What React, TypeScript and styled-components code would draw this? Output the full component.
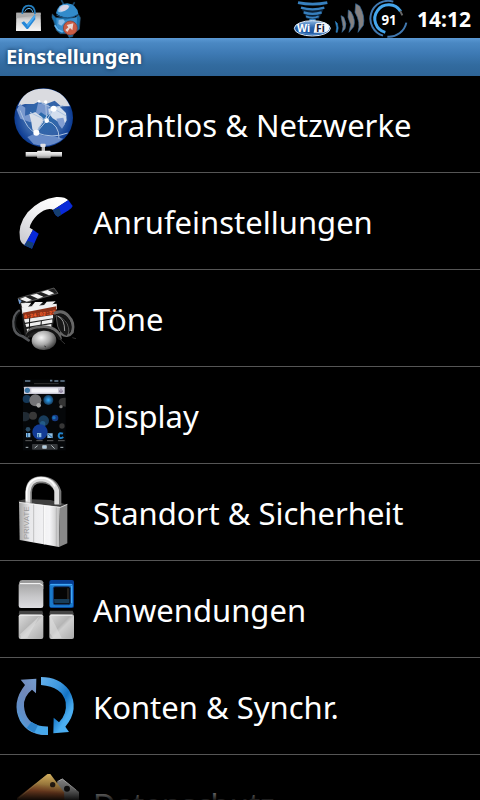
import React from 'react';
import styled, { createGlobalStyle } from 'styled-components';

const GlobalStyle = createGlobalStyle`
  * { box-sizing: border-box; }
  body { margin: 0; background: #000; }
`;

const Screen = styled.div`
  position: relative;
  display: flex;
  flex-direction: column;
  height: 100vh;
  overflow: hidden;
  background: #000;
  color: #fff;
  font-family: 'Noto Sans', 'Open Sans', sans-serif;
`;

const StatusBar = styled.div`
  display: flex;
  flex: none;
  align-items: center;
  justify-content: space-between;
  height: 38px;
  padding: 0 9px 0 14px;
`;

const StatusGroup = styled.div<{ $gap: number }>`
  display: flex;
  align-items: center;
  gap: ${(p) => p.$gap}px;
`;

const StatusIcon = styled.svg<{ $width: number }>`
  display: block;
  width: ${(p) => p.$width}px;
  height: 38px;
`;

const Clock = styled.time`
  margin-left: 6px;
  font-size: 21px;
  font-weight: 700;
  line-height: 38px;
`;

const TitleBar = styled.header`
  flex: none;
  height: 38px;
  padding: 0 6px;
  background: linear-gradient(#5b99d4 0, #4a88c3 5px, #3d79b3 16px, #326b9f 27px, #2e6496 100%);
`;

const Title = styled.h1`
  margin: 0;
  font-size: 20px;
  font-weight: 700;
  line-height: 38px;
  text-shadow: 0 0 4px #10304f;
`;

const List = styled.ul`
  flex: 1;
  min-height: 0;
  margin: 0;
  padding: 0;
  overflow: hidden;
  list-style: none;
`;

const Item = styled.li`
  border-bottom: 1px solid #555;
`;

const ItemButton = styled.button`
  display: flex;
  align-items: center;
  gap: 3px;
  width: 100%;
  height: 96px;
  padding: 0;
  border: 0;
  background: transparent;
  color: #fff;
  font-family: inherit;
  font-size: 31px;
  line-height: 44px;
  text-align: left;
  white-space: nowrap;
`;

const ItemLabel = styled.span`
  padding-top: 2px;
`;

const ItemIcon = styled.svg`
  flex: none;
  width: 90px;
  height: 96px;
`;

const Fade = styled.div`
  position: absolute;
  right: 0;
  bottom: 0;
  left: 0;
  height: 32px;
  background: linear-gradient(rgba(0, 0, 0, 0), rgba(0, 0, 0, 0.5) 70%, rgba(0, 0, 0, 0.9));
  pointer-events: none;
`;

const Row = ({ label, children }: { label: string; children: React.ReactNode }) => (
  <Item>
    <ItemButton type="button">
      <ItemIcon viewBox="0 0 270 288" aria-hidden="true">{children}</ItemIcon>
      <ItemLabel>{label}</ItemLabel>
    </ItemButton>
  </Item>
);

const BagIcon = () => (
  <StatusIcon $width={30} viewBox="42 0 90 114" aria-hidden="true">
    <defs>
      <linearGradient id="bag" x1="0" y1="0" x2="0" y2="1">
        <stop offset="0" stopColor="#969696" /><stop offset=".4" stopColor="#d6d6d6" /><stop offset="1" stopColor="#f4f4f4" />
      </linearGradient>
    </defs>
    <path d="M49 38H122L123 93H48Z" fill="url(#bag)" />
    <path d="M49 38H122V45L49 54Z" fill="#aaa" />
    <path d="M67 42Q67 17 86 17Q105 17 105 42" fill="none" stroke="#247dbd" strokeWidth="5" />
    <path d="M74 35Q78 25 87 25Q96 25 99 37" fill="none" stroke="#5db5ef" strokeWidth="3" />
    <path d="M64 68L72 64L81 73L105 43L106 58L84 87H80Z" fill="#2587d8" />
    <path d="M81 73L105 43L106 50L83 80Z" fill="#4eacf0" />
  </StatusIcon>
);

const DroidIcon = () => (
  <StatusIcon $width={32} viewBox="150 0 96 114" aria-hidden="true">
    <path d="M184 0L191 13M224 7L217 17" stroke="#17466c" strokeWidth="5" />
    <path d="M157 42Q153 53 161 63L169 91L181 101H202L207 112L218 110L220 101L238 88L241 53L236 44L226 53H168Z" fill="#176fab" stroke="#35536b" strokeWidth="2" />
    <path d="M168 40Q174 10 202 10Q231 13 235 42Q223 53 202 53Q180 52 168 40Z" fill="#328bcb" />
    <path d="M169 54L196 59L231 52L230 88L204 101L179 91L170 79Z" fill="#398ecd" />
    <path d="M169 45Q204 63 235 43" fill="none" stroke="#1b5688" strokeWidth="3" />
    <path d="M174 34Q177 15 192 14L210 17Q200 28 187 35Q179 39 174 34Z" fill="#9bc8ef" />
    <ellipse cx="193" cy="24" rx="14" ry="8" fill="#d7d3e5" transform="rotate(-25 193 24)" />
    <path d="M176 60L190 58L195 65L184 77L175 72Z" fill="#8ebee8" />
    <path d="M164 76L174 89L188 96" fill="none" stroke="#66b8f2" strokeWidth="5" />
    <circle cx="211" cy="84" r="21" fill="#ca5c44" stroke="#813a30" strokeWidth="2" />
    <path d="M200 75L220 70L217 91L210 84L202 96L196 90L205 82Z" fill="#e9d7d4" />
  </StatusIcon>
);

const WifiIcon = () => (
  <StatusIcon $width={38} viewBox="42 0 114 114" role="img" aria-label="WiFi">
    <defs>
      <linearGradient id="badge" x1="0" y1="0" x2="0" y2="1">
        <stop offset="0" stopColor="#8cb5df" /><stop offset=".45" stopColor="#2864ac" /><stop offset="1" stopColor="#174f9c" />
      </linearGradient>
    </defs>
    <path d="M66 23Q100 29 136 23L119 58H84Z" fill="#0b2137" />
    <g fill="none" stroke="#3780bf">
      <path d="M57 8Q101 17 145 8" strokeWidth="8" />
      <path d="M66 23Q100 33 136 23" strokeWidth="7" />
      <path d="M74 37Q100 46 128 37" strokeWidth="7" />
      <path d="M81 49Q101 57 119 49M91 60H110" strokeWidth="6" />
    </g>
    <ellipse cx="100" cy="85" rx="54" ry="23" fill="url(#badge)" stroke="#dbe9f7" strokeWidth="3" />
    <path d="M109 72Q112 68 120 68H137Q151 73 151 84Q150 96 135 98H104Z" fill="#f4f7fb" />
    <path d="M60 97Q94 108 133 100" fill="none" stroke="#5088c5" strokeWidth="4" />
    <text x="54" y="95" fontFamily="Noto Sans, sans-serif" fontSize="31" fontWeight="700" fill="#fff">Wi</text>
    <text x="111" y="95" fontFamily="Noto Sans, sans-serif" fontSize="31" fontWeight="700" fill="#17203a">Fi</text>
  </StatusIcon>
);

const SignalIcon = () => (
  <StatusIcon $width={34} viewBox="162 0 102 114" aria-hidden="true">
    <g fill="#858180" stroke="#2d6aa0" strokeWidth="2">
      <path d="M169 64L175 70Q180 84 175 97H171L173 83Z" fill="#2c92d8" />
      <path d="M186 47L194 51Q205 72 198 87L189 97L192 80Z" />
      <path d="M208 30L216 35Q231 60 224 80L210 97L215 74L207 52Z" />
      <path d="M230 11L242 18Q259 48 253 76L237 97Q246 67 228 37Z" />
    </g>
  </StatusIcon>
);

const BatteryIcon = () => (
  <StatusIcon $width={40} viewBox="267 0 120 114" role="img" aria-label="91">
    <g fill="none">
      <path d="M309 107A53 53 0 0 1 340 5" stroke="#4178b0" strokeWidth="6" />
      <path d="M379 68A53 53 0 0 1 322 110" stroke="#4178b0" strokeWidth="6" />
      <path d="M316 97A42 42 0 1 1 362 34" stroke="#45a7ee" strokeWidth="9" />
      <path d="M360 32L367 46" stroke="#666" strokeWidth="6" />
    </g>
    <text x="327" y="75" textAnchor="middle" fontFamily="Noto Sans, sans-serif" fontSize="40" fontWeight="700" fill="#fff">91</text>
  </StatusIcon>
);

const Globe = () => (
  <>
    <defs>
      <radialGradient id="ocean" cx=".5" cy=".5" r=".52">
        <stop offset="0" stopColor="#2a6cad" /><stop offset=".65" stopColor="#3462a8" /><stop offset="1" stopColor="#06358e" />
      </radialGradient>
      <linearGradient id="silver" x1="0" y1="0" x2="0" y2="1">
        <stop offset="0" stopColor="#f4f4f4" /><stop offset=".6" stopColor="#cfcfcf" /><stop offset="1" stopColor="#868686" />
      </linearGradient>
    </defs>
    <path d="M125 205H135V228H125Z" fill="#bbb" />
    <circle cx="131" cy="125" r="88" fill="url(#ocean)" />
    <path d="M54 90Q73 37 131 38Q188 39 210 91L183 91L164 74L139 84L115 77L102 84L75 84Z" fill="#dadbe0" />
    <path d="M60 84L76 95L75 119L108 108L114 82L146 86L151 109L136 118L123 109L91 139L61 128L50 101Z" fill="#7998ce" />
    <path d="M88 114L106 109L127 124L130 139L116 155L108 177L97 159L94 139Z" fill="#d8dee8" />
    <path d="M145 98L177 90L198 111L200 133L190 151L175 137L158 127L147 113Z" fill="#d3deed" />
    <path d="M169 128L190 125L195 144L186 158L177 147Z" fill="#829ed2" />
    <path d="M82 183L109 171L132 180L163 181L190 188Q151 219 101 205Z" fill="#678bc8" />
    <g stroke="#acc3e1" strokeWidth="3" fill="none">
      <path d="M60 103Q82 166 109 170Q156 189 203 171M109 170L140 134L137 78M140 134L161 98L199 120M161 98L117 77M140 134L90 109M109 170Q148 91 190 88M140 134Q178 145 177 188" />
    </g>
    <g fill="#fff"><circle cx="140" cy="134" r="7" /><circle cx="161" cy="98" r="9" /><circle cx="109" cy="170" r="9" /><circle cx="117" cy="76" r="4" /><circle cx="137" cy="78" r="5" /></g>
    <path d="M77 228H186V242H77Z" fill="url(#silver)" />
    <rect x="111" y="224" width="41" height="23" rx="3" fill="url(#silver)" />
    <rect x="121" y="203" width="16" height="10" rx="3" fill="#e1e1e5" />
  </>
);

const Phone = () => (
  <>
    <defs>
      <linearGradient id="handset" x1=".1" y1="1" x2=".8" y2="0">
        <stop offset="0" stopColor="#c9c9cf" /><stop offset=".55" stopColor="#f0f0f2" /><stop offset="1" stopColor="#fff" />
      </linearGradient>
    </defs>
    <path d="M205 82Q196 71 169 72Q118 79 83 118Q52 157 60 199Q64 212 75 217L99 170L89 164Q92 146 112 126Q138 103 156 109L159 111Z" fill="url(#handset)" />
    <path d="M205 81L218 99Q216 106 206 112L174 131Q166 130 159 111Z" fill="#0829d9" />
    <path d="M159 111L178 106L184 125L174 131Q166 130 159 111Z" fill="#153f70" />
    <path d="M99 170L116 182L96 227L73 217Z" fill="#0829d9" />
    <path d="M83 203L101 210L96 227L73 217Z" fill="#153f70" />
  </>
);

const Media = () => (
  <>
    <defs>
      <radialGradient id="ear" cx=".4" cy=".35" r=".65">
        <stop offset="0" stopColor="#f5f5f5" /><stop offset=".55" stopColor="#aaa" /><stop offset="1" stopColor="#444" />
      </radialGradient>
    </defs>
    <path d="M61 105L163 97L170 126L154 182L76 207Z" fill="#202020" />
    <path d="M54 85L162 54L174 70L61 102Z" fill="#202020" stroke="#777" strokeWidth="2" />
    <path d="M59 87L76 80L96 90L80 95ZM91 76L110 71L130 80L114 86ZM123 66L143 60L163 70L147 76Z" fill="#f3f3f3" />
    <path d="M63 100L94 98L82 113L66 112ZM105 96L129 96L116 109L94 110ZM140 95L167 94L154 106L130 108Z" fill="#f0f0f0" />
    <path d="M65 112L170 101L171 118L67 131Z" fill="#f0f0f0" />
    <path d="M69 128L169 109V132L72 148Z" fill="#8c3219" />
    <text x="72" y="145" transform="rotate(-8 72 145)" fontFamily="Liberation Mono, monospace" fontSize="16" fontWeight="700" fill="#ff6632">4:24:02:23</text>
    <path d="M72 148L159 135V145L75 158ZM76 162L157 148V158L79 171ZM80 177L154 162V171L82 186Z" fill="#eee" />
    <path d="M89 143L88 184M124 153L122 181" stroke="#111" strokeWidth="3" />
    <g fill="none" strokeLinecap="round">
      <path d="M57 123Q37 135 41 170Q44 194 68 199L86 211" stroke="#55575a" strokeWidth="8" />
      <path d="M58 127Q42 142 47 171L61 190" stroke="#141617" strokeWidth="5" />
      <path d="M82 198Q83 169 137 171Q175 174 181 205M165 129Q190 119 205 138Q224 157 217 186Q203 205 183 190" stroke="#666" strokeWidth="9" />
      <path d="M81 198Q88 178 132 178Q163 179 178 206M169 137Q190 131 203 151Q216 172 207 187" stroke="#141414" strokeWidth="8" />
    </g>
    <path d="M168 137Q191 141 202 162Q212 186 200 199Q181 192 173 169Z" fill="#171717" stroke="#777" strokeWidth="2" />
    <path d="M174 139Q194 147 194 183" fill="none" stroke="#ddd" strokeWidth="2" />
    <ellipse cx="132" cy="211" rx="37" ry="29" fill="url(#ear)" transform="rotate(-5 132 211)" />
    <path d="M133 228L138 231M217 203L228 206M181 209L195 222" stroke="#333" strokeWidth="3" />
    <path d="M54 86L65 93L58 103Z" fill="#719ad1" />
  </>
);

const DisplayArt = () => (
  <>
    <defs>
      <radialGradient id="glow"><stop offset="0" stopColor="#2daaff" /><stop offset=".65" stopColor="#1e6093" /><stop offset="1" stopColor="#12385b" /></radialGradient>
    </defs>
    <rect x="69" y="38" width="128" height="212" fill="#050709" />
    <path d="M75 42H91M150 41H157M163 42H175M181 42H194" stroke="#688095" strokeWidth="5" />
    <path d="M102 50H176" stroke="#333" strokeWidth="3" />
    <rect x="72" y="59" width="122" height="22" rx="2" fill="#c9c8d5" />
    <path d="M94 64H174V77H94Z" fill="#f2f2f7" /><circle cx="82" cy="70" r="8" fill="#3b75a5" /><path d="M183 65V78M179 70V75H187V70" fill="none" stroke="#8b7f9c" strokeWidth="3" />
    <g>
      <circle cx="80" cy="96" r="12" fill="#153858" /><circle cx="106" cy="100" r="18" fill="#747477" /><circle cx="116" cy="115" r="7" fill="#aaa" />
      <circle cx="145" cy="99" r="15" fill="url(#glow)" /><path d="M197 92Q176 91 176 105Q177 118 197 119Z" fill="#333" /><circle cx="183" cy="119" r="5" fill="#777" />
      <path d="M69 135Q90 133 90 149Q89 163 69 163Z" fill="#202a33" /><circle cx="99" cy="146" r="12" fill="#383838" /><circle cx="131" cy="161" r="16" fill="#183c5b" /><circle cx="128" cy="170" r="8" fill="#235b87" />
      <circle cx="165" cy="153" r="10" fill="#173b82" /><circle cx="162" cy="152" r="5" fill="#1a72bd" /><circle cx="186" cy="177" r="8" fill="#363636" /><circle cx="84" cy="187" r="7" fill="#294b65" />
      <circle cx="120" cy="195" r="23" fill="#123b95" />
    </g>
    <path d="M78 198H91V211H78ZM111 198H124V211H111ZM142 199H158V213H142Z" fill="#8dbce1" />
    <path d="M83 198V211M115 201V210M145 202L157 212" stroke="#1b61a0" strokeWidth="3" />
    <path d="M189 200Q176 195 176 207Q179 218 190 210" fill="none" stroke="#2385ce" strokeWidth="6" />
    <path d="M76 221H96M109 221H128M141 221H160M174 221H194" stroke="#858585" strokeWidth="2" />
    <rect x="96" y="231" width="77" height="17" rx="3" fill="#35383b" /><path d="M77 241H85M181 241H190M104 243L113 236M128 236H139V244H128ZM154 235L164 245" fill="#abd1ec" stroke="#aeb8bd" strokeWidth="3" />
  </>
);

const Lock = () => (
  <>
    <defs>
      <linearGradient id="metal"><stop offset="0" stopColor="#a4a4a4" /><stop offset=".25" stopColor="#e8e8ea" /><stop offset=".75" stopColor="#f5f5f7" /><stop offset="1" stopColor="#bbb" /></linearGradient>
    </defs>
    <path d="M56 110L77 105L152 108L202 122L185 131L57 115Z" fill="#3f3f3f" />
    <path d="M86 117V86Q87 48 123 47Q163 48 174 83V123" fill="none" stroke="#777" strokeWidth="20" />
    <path d="M84 116V84Q87 45 123 45Q159 47 170 79V121" fill="none" stroke="#ddd" strokeWidth="14" />
    <path d="M80 110V81Q86 44 123 42Q153 42 165 67" fill="none" stroke="#fff" strokeWidth="5" />
    <path d="M57 114L180 129L177 249L59 228Z" fill="url(#metal)" />
    <path d="M180 129L202 120V238L177 249Z" fill="#888" />
    <path d="M101 119V234M132 123V241M169 128V246" stroke="#aaa" strokeWidth="2" />
    <path d="M134 124V241" stroke="#fff" strokeWidth="3" />
    <path d="M57 115L181 130L202 121" fill="none" stroke="#fff" strokeWidth="2" />
    <text x="87" y="226" transform="rotate(-90 87 226)" fontFamily="Liberation Sans, sans-serif" fontSize="24" fill="#999">PRIVATE</text>
  </>
);

const Blocks = () => (
  <>
    <defs>
      <linearGradient id="tile" x1="0" y1="0" x2="1" y2="1"><stop offset="0" stopColor="#ddd" /><stop offset=".45" stopColor="#b5b5b5" /><stop offset=".55" stopColor="#cfcfcf" /><stop offset="1" stopColor="#aaa" /></linearGradient>
      <linearGradient id="tileTop" x1="0" y1="0" x2="0" y2="1"><stop offset="0" stopColor="#a3a3a3" /><stop offset=".55" stopColor="#c7c7c9" /><stop offset="1" stopColor="#dcdce0" /></linearGradient>
    </defs>
    <path d="M58 64Q59 57 67 57H120Q128 57 130 64V84H57Z" fill="#999" />
    <rect x="56" y="65" width="74" height="76" rx="7" fill="url(#tileTop)" />
    <path d="M60 68H120L128 74" fill="none" stroke="#fff" strokeWidth="3" />
    <rect x="148" y="57" width="74" height="84" rx="6" fill="#063c91" /><rect x="149" y="68" width="70" height="71" rx="5" fill="#197acb" />
    <path d="M151 71H216M215 75V126" stroke="#4bafff" strokeWidth="3" /><rect x="160" y="77" width="51" height="54" rx="5" fill="#050505" stroke="#143c78" strokeWidth="3" />
    <path d="M162 114H208V127H163Z" fill="#183d59" /><path d="M204 82V114" stroke="#35302a" strokeWidth="4" />
    <path d="M58 149H127L130 160H56ZM150 149H218L222 160H148Z" fill="#454545" />
    <rect x="56" y="160" width="74" height="74" rx="6" fill="url(#tile)" /><rect x="148" y="160" width="74" height="74" rx="6" fill="url(#tile)" />
    <path d="M59 163H126M151 163H217" stroke="#eee" strokeWidth="3" /><path d="M60 220L118 166L82 231H64ZM151 163L185 231H160L150 217Z" fill="#ddd" opacity=".6" />
  </>
);

const Sync = () => (
  <>
    <defs>
      <linearGradient id="syncL" x1="1" y1="0" x2=".2" y2="1"><stop offset="0" stopColor="#77a9dc" /><stop offset=".5" stopColor="#7188b9" /><stop offset=".8" stopColor="#5f8fc9" /><stop offset="1" stopColor="#4ba8e8" /></linearGradient>
      <linearGradient id="syncR" x1="0" y1="0" x2="1" y2="1"><stop offset="0" stopColor="#66b1ec" /><stop offset=".35" stopColor="#3d98df" /><stop offset=".55" stopColor="#1474c5" /><stop offset=".75" stopColor="#4baef1" /></linearGradient>
    </defs>
    <path d="M62 65L109 62L108 106L96 95Q70 115 72 145Q76 196 125 206H144V231Q86 233 60 188Q33 134 75 81Z" fill="url(#syncL)" />
    <path d="M123 57Q177 57 207 96Q240 154 196 206L207 222L160 226L161 179L177 193Q202 168 197 133Q187 86 123 81Z" fill="url(#syncR)" />
    <path d="M80 210L94 192Q112 206 144 206V231Q105 232 80 210Z" fill="#46a7ea" /><path d="M80 210L94 192L114 202L103 224Z" fill="#2d83cb" />
  </>
);

const Tags = () => (
  <>
    <defs><linearGradient id="tag" x1=".7" y1="0" x2=".5" y2="1"><stop offset="0" stopColor="#f5cd6e" /><stop offset=".3" stopColor="#edb95e" /><stop offset=".5" stopColor="#d2703c" /><stop offset="1" stopColor="#8a5f3c" /></linearGradient></defs>
    <path d="M172 78L187 71L237 111V145H165Z" fill="#aaa" /><path d="M176 78L187 72L228 105" fill="none" stroke="#ddd" strokeWidth="3" />
    <path d="M52 128L143 57H151L192 112L195 164H45Z" fill="url(#tag)" />
    <circle cx="158" cy="89" r="8" fill="#322619" /><circle cx="201" cy="101" r="9" fill="#151515" />
    <path d="M57 129L143 58" stroke="#efc976" strokeWidth="2" />
  </>
);

const settings = [
  { label: 'Drahtlos & Netzwerke', Icon: Globe },
  { label: 'Anrufeinstellungen', Icon: Phone },
  { label: 'Töne', Icon: Media },
  { label: 'Display', Icon: DisplayArt },
  { label: 'Standort & Sicherheit', Icon: Lock },
  { label: 'Anwendungen', Icon: Blocks },
  { label: 'Konten & Synchr.', Icon: Sync },
  { label: 'Datenschutz', Icon: Tags },
];

export default function App() {
  return (
    <Screen>
      <GlobalStyle />
      <StatusBar>
        <StatusGroup $gap={6}><BagIcon /><DroidIcon /></StatusGroup>
        <StatusGroup $gap={2}><WifiIcon /><SignalIcon /><BatteryIcon /><Clock>14:12</Clock></StatusGroup>
      </StatusBar>
      <TitleBar><Title>Einstellungen</Title></TitleBar>
      <List>
        {settings.map(({ label, Icon }) => <Row key={label} label={label}><Icon /></Row>)}
      </List>
      <Fade />
    </Screen>
  );
}
